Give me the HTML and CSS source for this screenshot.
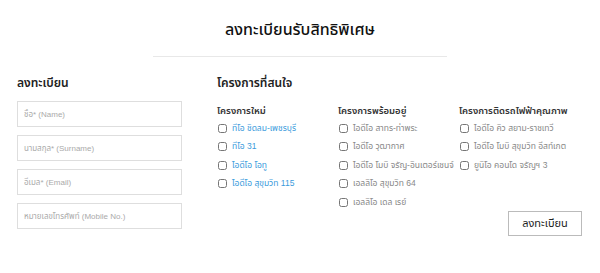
FILE: index.html
```html
<!doctype html>
<html lang="th">
    <head>
        <meta charset="UTF-8" />
        <meta name="viewport" content="width=device-width, initial-scale=1.0" />
        <title>ลงทะเบียนรับสิทธิพิเศษ</title>
        <link rel="stylesheet" href="styles.css">
    </head>
    <body>
        <div class="header">
            <h1>ลงทะเบียนรับสิทธิพิเศษ</h1>
            <div class="divider"></div>
        </div>
        <form class="register" action="#" method="post">
            <!-- Contact details -->
            <div class="contact">
                <h2>ลงทะเบียน</h2>
                <input type="text" name="name" placeholder="ชื่อ* (Name)" />
                <input type="text" name="surname" placeholder="นามสกุล* (Surname)" />
                <input type="text" name="email" placeholder="อีเมล* (Email)" />
                <input type="text" name="mobile" placeholder="หมายเลขโทรศัพท์ (Mobile No.)" />
            </div>

            <!-- Projects -->
            <div class="projects">
                <h2>โครงการที่สนใจ</h2>
                <div class="project-cols">
                    <div class="project-col new">
                        <h3>โครงการใหม่</h3>
                        <label><input type="checkbox" /> ทีโอ ชิดลม-เพชรบุรี</label>
                        <label><input type="checkbox" /> ทีโอ 31</label>
                        <label><input type="checkbox" /> ไอดีโอ โอทู</label>
                        <label><input type="checkbox" /> ไอดีโอ สุขุมวิท 115</label>
                    </div>
                    <div class="project-col">
                        <h3>โครงการพร้อมอยู่</h3>
                        <label><input type="checkbox" /> ไอดีโอ สาทร-ท่าพระ</label>
                        <label><input type="checkbox" /> ไอดีโอ วุฒากาศ</label>
                        <label><input type="checkbox" /> ไอดีโอ โมบิ จรัญ-อินเตอร์เชนจ์</label>
                        <label><input type="checkbox" /> เอลลิโอ สุขุมวิท 64</label>
                        <label><input type="checkbox" /> เอลลิโอ เดล เรย์</label>
                    </div>
                    <div class="project-col">
                        <h3>โครงการติดรถไฟฟ้าคุณภาพ</h3>
                        <label><input type="checkbox" /> ไอดีโอ คิว สยาม-ราชเทวี</label>
                        <label><input type="checkbox" /> ไอดีโอ โมบิ สุขุมวิท อีสท์เกต</label>
                        <label><input type="checkbox" /> ยูนิโอ คอนโด จรัญฯ 3</label>
                    </div>
                </div>
                <div class="actions">
                    <button class="button" type="submit">ลงทะเบียน</button>
                </div>
            </div>
        </form>
    </body>
</html>
```

FILE: styles.css
```css
body {
    font-family: "Liberation Sans", "Noto Sans Thai", Arial, sans-serif;
    background-color: #fff;
    margin: 0;
    padding: 0;
    color: #222;
}
.header {
    padding-top: 18px;
    text-align: center;
}
h1 {
    margin: 0;
    font-size: 16px;
    font-weight: 500;
    line-height: 24px;
    color: #111;
}
.divider {
    width: 294px;
    height: 1px;
    margin: 14px auto 0;
    background: #e8e8e8;
}
.register {
    display: flex;
    padding: 0 18px 0 17px;
    margin-top: 17px;
}
h2 {
    margin: 0 0 10px;
    font-size: 12px;
    font-weight: 600;
    line-height: 18px;
    color: #222;
}
.contact {
    width: 165px;
    display: flex;
    flex-direction: column;
    gap: 8px;
}
.contact h2 {
    margin-bottom: 1px;
}
.contact input[type="text"] {
    box-sizing: border-box;
    width: 100%;
    height: 26px;
    margin: 0;
    padding: 0 6px;
    border: 1px solid #dedede;
    border-radius: 0;
    font-family: inherit;
    font-size: 8px;
    color: #333;
}
.contact input::placeholder {
    color: #aaa;
}
.projects {
    flex: 1;
    margin-left: 35px;
}
.project-cols {
    display: flex;
}
.project-col {
    width: 121px;
    display: flex;
    flex-direction: column;
}
.project-col h3 {
    margin: 2px 0 1px;
    font-size: 9.5px;
    font-weight: 600;
    line-height: 14px;
    color: #333;
}
.project-col label {
    display: flex;
    align-items: center;
    height: 18.5px;
    font-size: 8.5px;
    color: #888;
    white-space: nowrap;
}
.project-col.new label {
    color: #3a9bdc;
}
.project-col input[type="checkbox"] {
    width: 9px;
    height: 9px;
    margin: 0 5px 0 1px;
}
.actions {
    display: flex;
    justify-content: flex-end;
    margin-top: -1px;
}
.button {
    width: 74px;
    height: 25px;
    background: #fff;
    border: 1px solid #bbb;
    border-radius: 0;
    font-family: inherit;
    font-size: 11px;
    color: #222;
    cursor: pointer;
}
```
